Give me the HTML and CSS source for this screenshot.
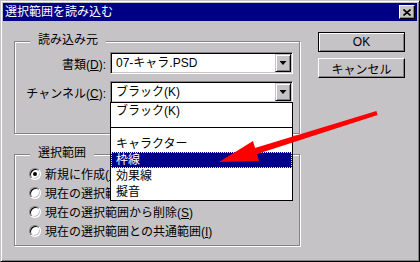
FILE: index.html
```html
<!DOCTYPE html>
<html lang="ja">
<head>
    <meta charset="UTF-8">
    <title>選択範囲を読み込む</title>
    <link rel="stylesheet" href="styles.css">
</head>
<body>
    <div class="window">
        <div class="titlebar">
            <span class="title">選択範囲を読み込む</span>
            <span class="close">
                <svg width="8" height="7" viewBox="0 0 8 7"><path d="M0.5 0.5 L7.5 6.5 M7.5 0.5 L0.5 6.5" stroke="#000" stroke-width="1.6" fill="none"/></svg>
            </span>
        </div>
        <div class="main">
            <div class="left">
                <div class="group group-source">
                    <div class="group-label">読み込み元</div>
                    <div class="fields">
                        <label class="field-label">書類(<u>D</u>):</label>
                        <div class="combo">
                            <span class="combo-text">07-キャラ.PSD</span>
                            <span class="drop-btn"><i class="tri"></i></span>
                        </div>
                        <label class="field-label">チャンネル(<u>C</u>):</label>
                        <div class="combo">
                            <span class="combo-text">ブラック(K)</span>
                            <span class="drop-btn"><i class="tri"></i></span>
                            <ul class="drop-list">
                                <li>ブラック(K)</li>
                                <li class="sep"></li>
                                <li>キャラクター</li>
                                <li class="selected">枠線</li>
                                <li>効果線</li>
                                <li>擬音</li>
                            </ul>
                        </div>
                    </div>
                </div>
                <div class="group group-mode">
                    <div class="group-label">選択範囲</div>
                    <div class="radios">
                        <div class="radio-row"><span class="radio checked"></span><span>新規に作成(<u>N</u>)</span></div>
                        <div class="radio-row"><span class="radio"></span><span>現在の選択範囲に追加(<u>A</u>)</span></div>
                        <div class="radio-row"><span class="radio"></span><span>現在の選択範囲から削除(<u>S</u>)</span></div>
                        <div class="radio-row"><span class="radio"></span><span>現在の選択範囲との共通範囲(<u>I</u>)</span></div>
                    </div>
                </div>
            </div>
            <div class="buttons">
                <button class="btn btn-default">OK</button>
                <button class="btn">キャンセル</button>
            </div>
        </div>
        <!-- annotation arrow drawn over the dialog -->
        <svg class="arrow" width="420" height="262" viewBox="0 0 420 262">
            <polygon points="376.4,111.1 377.6,114.9 255.5,154.6 253.3,148.4" fill="#ff0000"/>
            <polygon points="219,162 253,141 259,161" fill="#ff0000"/>
        </svg>
    </div>
</body>
</html>
```

FILE: styles.css
```css
body {
    margin: 0;
    font-family: "Liberation Sans", "Noto Sans CJK JP", sans-serif;
    font-size: 12px;
    color: #000;
}
.window {
    position: relative;
    width: 420px;
    height: 262px;
    box-sizing: border-box;
    border: 1px solid;
    border-color: #c6c3c6 #000 #000 #c6c3c6;
    box-shadow: inset 1px 1px #fff, inset -1px -1px #848284;
    padding: 2px;
    background-color: #c6c3c6;
    overflow: hidden;
}
.titlebar {
    display: flex;
    justify-content: space-between;
    align-items: center;
    height: 18px;
    background-color: #000084;
}
.title {
    color: white;
    padding-left: 2px;
    line-height: 18px;
}
.close {
    display: flex;
    align-items: center;
    justify-content: center;
    width: 16px;
    height: 14px;
    margin-right: 2px;
    box-sizing: border-box;
    background-color: #c6c3c6;
    border: 1px solid;
    border-color: #fff #000 #000 #fff;
    box-shadow: inset -1px -1px #848284;
}
.main {
    display: flex;
    padding-left: 11px;
}
.left {
    width: 286px;
    margin-top: 20px;
}
.group {
    box-sizing: border-box;
    border: 1px solid #848284;
    box-shadow: inset 1px 1px #fff, 1px 1px #fff;
}
.group-source {
    height: 93px;
}
.group-mode {
    height: 92px;
    margin-top: 20px;
}
.group-label {
    width: fit-content;
    margin: -10px 0 0 15px;
    padding: 0 8px;
    line-height: 16px;
    background-color: #c6c3c6;
}
.fields {
    display: grid;
    grid-template-columns: 91px 183px;
    column-gap: 4px;
    row-gap: 7px;
    margin-top: 4px;
}
.field-label {
    align-self: center;
    text-align: right;
}
.combo {
    position: relative;
    display: flex;
    height: 22px;
    box-sizing: border-box;
    padding: 1px;
    border: 1px solid;
    border-color: #848284 #fff #fff #848284;
    box-shadow: inset 1px 1px #000, inset -1px -1px #c6c3c6;
    background-color: white;
}
.combo-text {
    flex: 1;
    padding-left: 4px;
    line-height: 18px;
}
.drop-btn {
    display: flex;
    align-items: center;
    justify-content: center;
    width: 16px;
    height: 18px;
    box-sizing: border-box;
    border: 1px solid;
    border-color: #c6c3c6 #000 #000 #c6c3c6;
    box-shadow: inset 1px 1px #fff, inset -1px -1px #848284;
    background-color: #c6c3c6;
}
.tri {
    width: 7px;
    height: 4px;
    background-color: #000;
    clip-path: polygon(0 0, 100% 0, 50% 100%);
}
.drop-list {
    position: absolute;
    top: 20px;
    left: -1px;
    z-index: 2;
    width: 183px;
    box-sizing: border-box;
    margin: 0;
    padding: 0;
    list-style: none;
    border: 1px solid #000;
    background-color: white;
}
.drop-list li {
    height: 16px;
    box-sizing: border-box;
    padding-left: 5px;
    line-height: 16px;
}
.drop-list .sep {
    height: 17px;
    padding: 8px 0 0;
}
.drop-list .sep::after {
    content: "";
    display: block;
    height: 1px;
    background-color: #000;
}
.drop-list .selected {
    padding-left: 4px;
    line-height: 14px;
    border: 1px dotted #ffff7b;
    background-color: #000084;
    color: white;
}
.radios {
    margin: 3px 0 0 14px;
}
.radio-row {
    display: flex;
    align-items: center;
    gap: 4px;
    height: 19px;
    white-space: nowrap;
}
.radio {
    display: flex;
    align-items: center;
    justify-content: center;
    width: 12px;
    height: 12px;
    box-sizing: border-box;
    border: 1px solid;
    border-color: #848284 #fff #fff #848284;
    border-radius: 50%;
    box-shadow: inset 1px 1px #000, inset -1px -1px #c6c3c6;
    background-color: white;
}
.radio.checked::after {
    content: "";
    width: 4px;
    height: 4px;
    border-radius: 50%;
    background-color: #000;
}
.buttons {
    display: flex;
    flex-direction: column;
    gap: 6px;
    width: 87px;
    margin: 11px 0 0 18px;
}
.btn {
    height: 20px;
    box-sizing: border-box;
    padding: 0;
    font-family: inherit;
    font-size: 12px;
    color: #000;
    background-color: #c6c3c6;
    border: 1px solid;
    border-color: #fff #000 #000 #fff;
    box-shadow: inset -1px -1px #848284;
}
.btn-default {
    border-color: #000;
    box-shadow: inset 1px 1px #fff, inset -1px -1px #848284;
}
.arrow {
    position: absolute;
    top: -1px;
    left: -1px;
    z-index: 3;
    pointer-events: none;
}
```
